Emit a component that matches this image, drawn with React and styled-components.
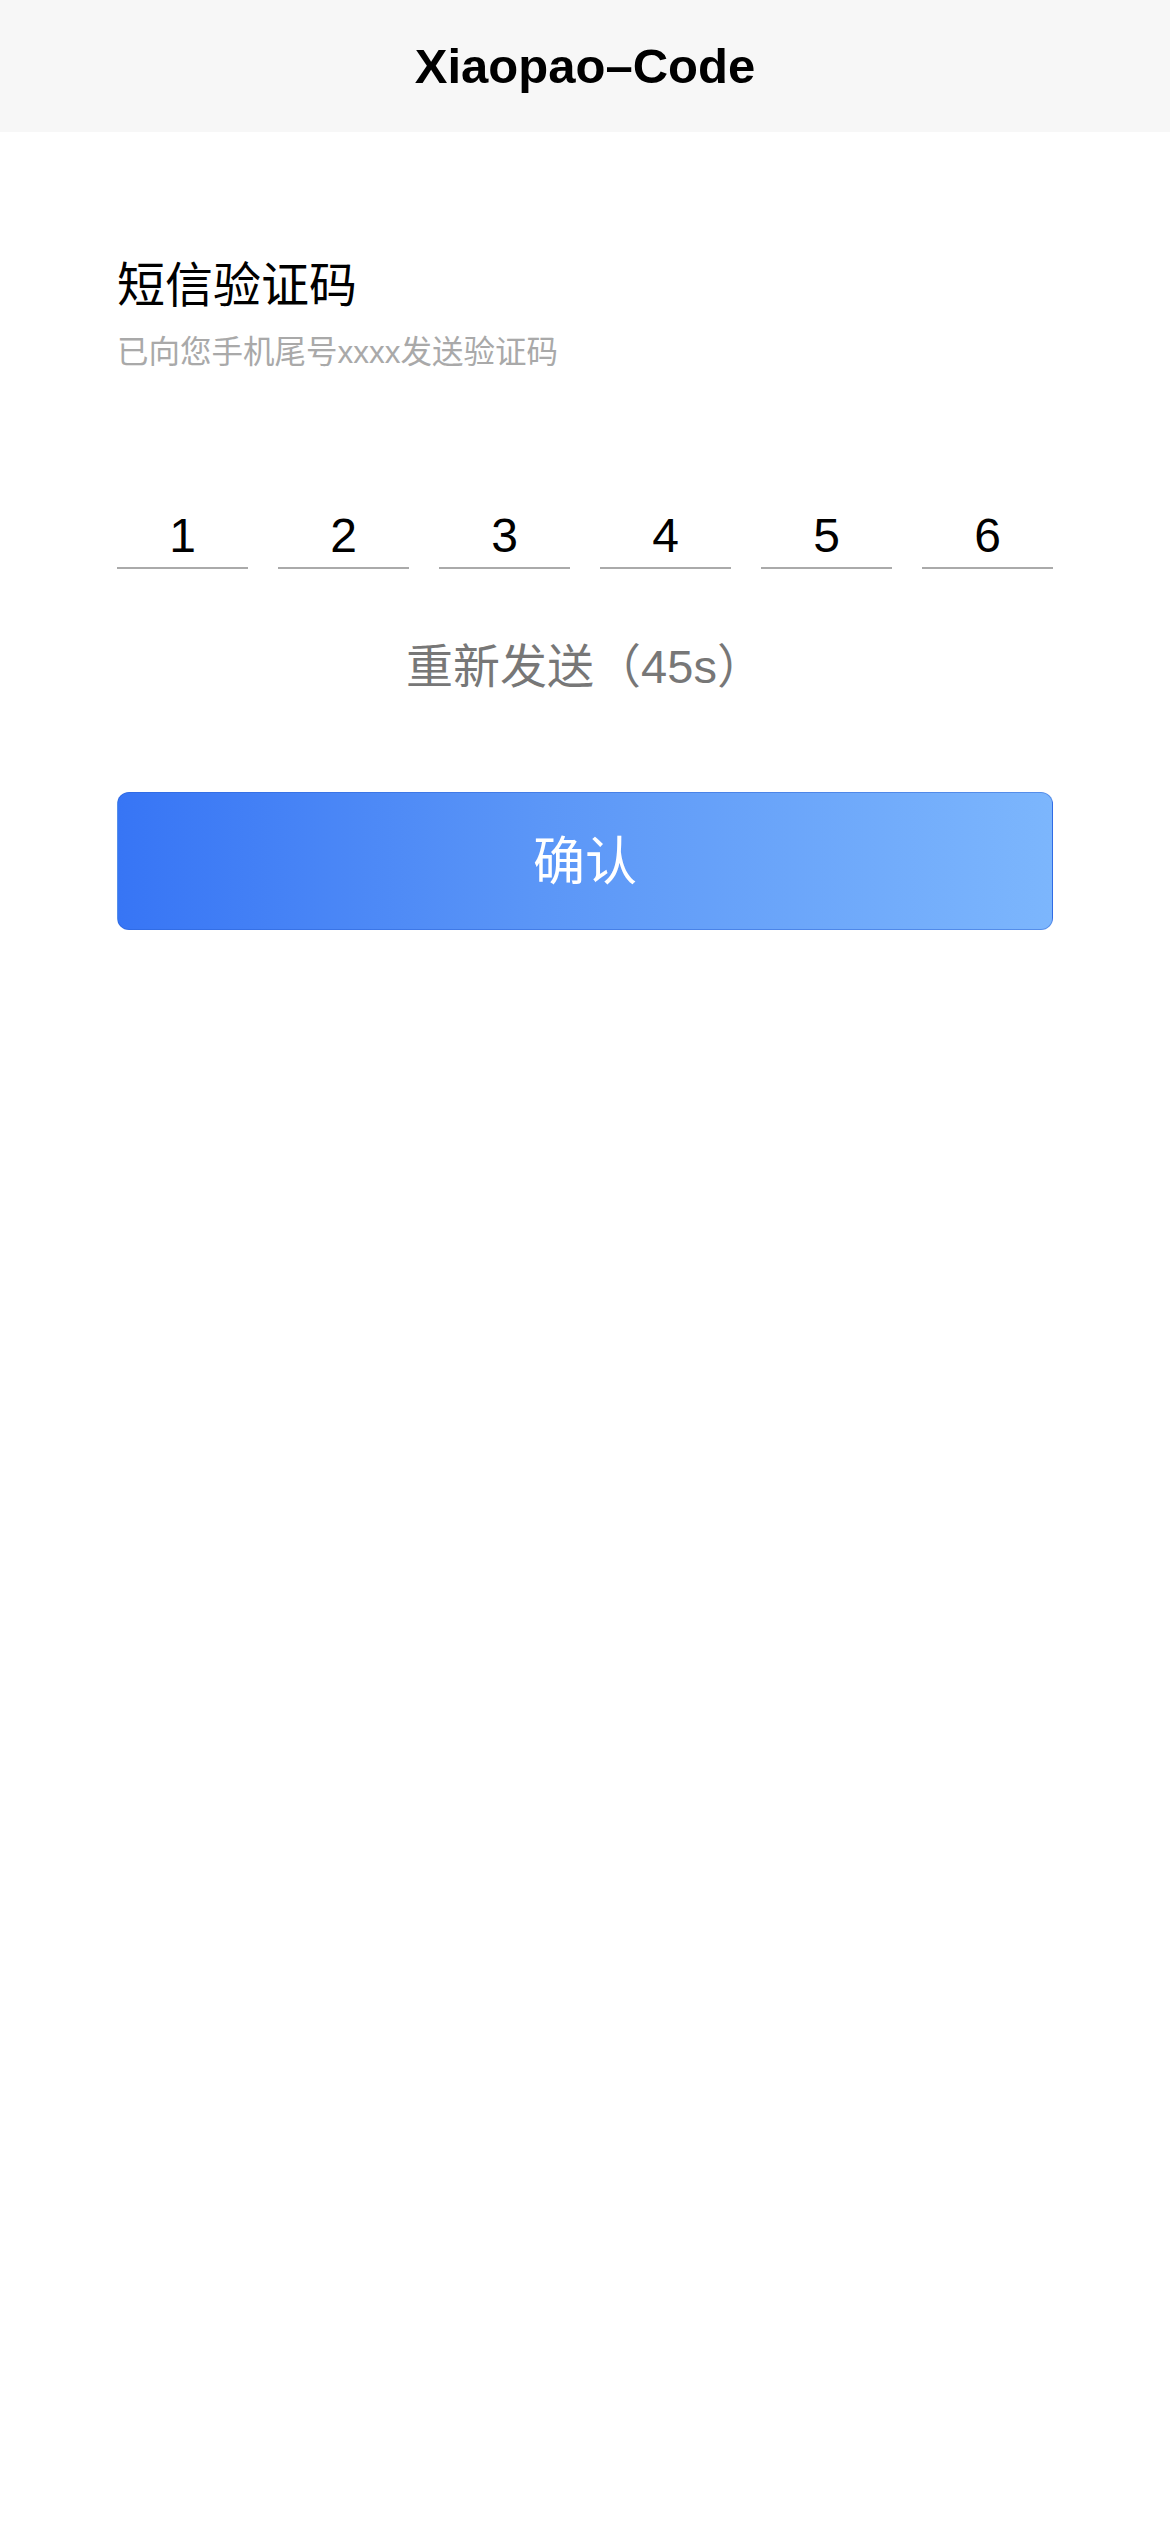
import React from "react";
import styled, { createGlobalStyle } from "styled-components";

const GlobalStyle = createGlobalStyle`
  html, body {
    margin: 0;
    padding: 0;
    background: #ffffff;
  }
  body {
    font-family: "Liberation Sans", "Noto Sans CJK SC", sans-serif;
  }
`;

const Page = styled.div`
  width: 1170px;
  min-height: 2532px;
  background: #ffffff;
  display: flex;
  flex-direction: column;
`;

const NavBar = styled.header`
  height: 132px;
  background: #f7f7f7;
  display: flex;
  align-items: center;
  justify-content: center;
`;

const NavTitle = styled.h1`
  margin: 0;
  font-family: "Liberation Sans", Arial, sans-serif;
  font-weight: 700;
  font-size: 49px;
  line-height: 1;
  color: #000;
`;

const Content = styled.main`
  padding: 125px 117px 0;
  display: flex;
  flex-direction: column;
`;

const Heading = styled.h2`
  margin: 0;
  font-family: "Noto Sans CJK SC", sans-serif;
  font-weight: 400;
  font-size: 48px;
  line-height: 48px;
  color: #000;
`;

const SubText = styled.p`
  margin: 31px 0 0;
  font-family: "Liberation Sans", "Noto Sans CJK SC", sans-serif;
  font-size: 31.5px;
  line-height: 32px;
  color: #a9a9a9;
`;

const CodeRow = styled.div`
  margin-top: 144px;
  display: grid;
  grid-template-columns: repeat(6, 1fr);
  column-gap: 30px;
`;

const CodeCell = styled.div`
  height: 48px;
  padding-bottom: 7px;
  border-bottom: 2.5px solid #aaaaaa;
  display: flex;
  justify-content: center;
  font-family: "Liberation Sans", Arial, sans-serif;
  font-size: 48px;
  line-height: 48px;
  color: #000;
`;

const Resend = styled.div`
  margin-top: 74px;
  text-align: center;
  font-family: "Liberation Sans", "Noto Sans CJK SC", sans-serif;
  font-size: 47px;
  line-height: 47px;
  color: #777777;
`;

const ConfirmButton = styled.button`
  margin-top: 102px;
  height: 138px;
  width: 100%;
  border: 1px solid rgba(40, 95, 210, 0.45);
  border-radius: 12px;
  background: linear-gradient(to right, #3775f5 0%, #5b96f7 45%, #7cb6fd 100%);
  color: #ffffff;
  font-family: "Noto Sans CJK SC", sans-serif;
  font-size: 52px;
  display: flex;
  align-items: center;
  justify-content: center;
  padding: 0 0 8px;
`;

const digits = ["1", "2", "3", "4", "5", "6"];

export default function App() {
  return (
    <Page>
      <GlobalStyle />
      <NavBar>
        <NavTitle>Xiaopao–Code</NavTitle>
      </NavBar>
      <Content>
        <Heading>短信验证码</Heading>
        <SubText>已向您手机尾号xxxx发送验证码</SubText>
        <CodeRow>
          {digits.map((d) => (
            <CodeCell key={d}>{d}</CodeCell>
          ))}
        </CodeRow>
        <Resend>重新发送（45s）</Resend>
        <ConfirmButton>确认</ConfirmButton>
      </Content>
    </Page>
  );
}
